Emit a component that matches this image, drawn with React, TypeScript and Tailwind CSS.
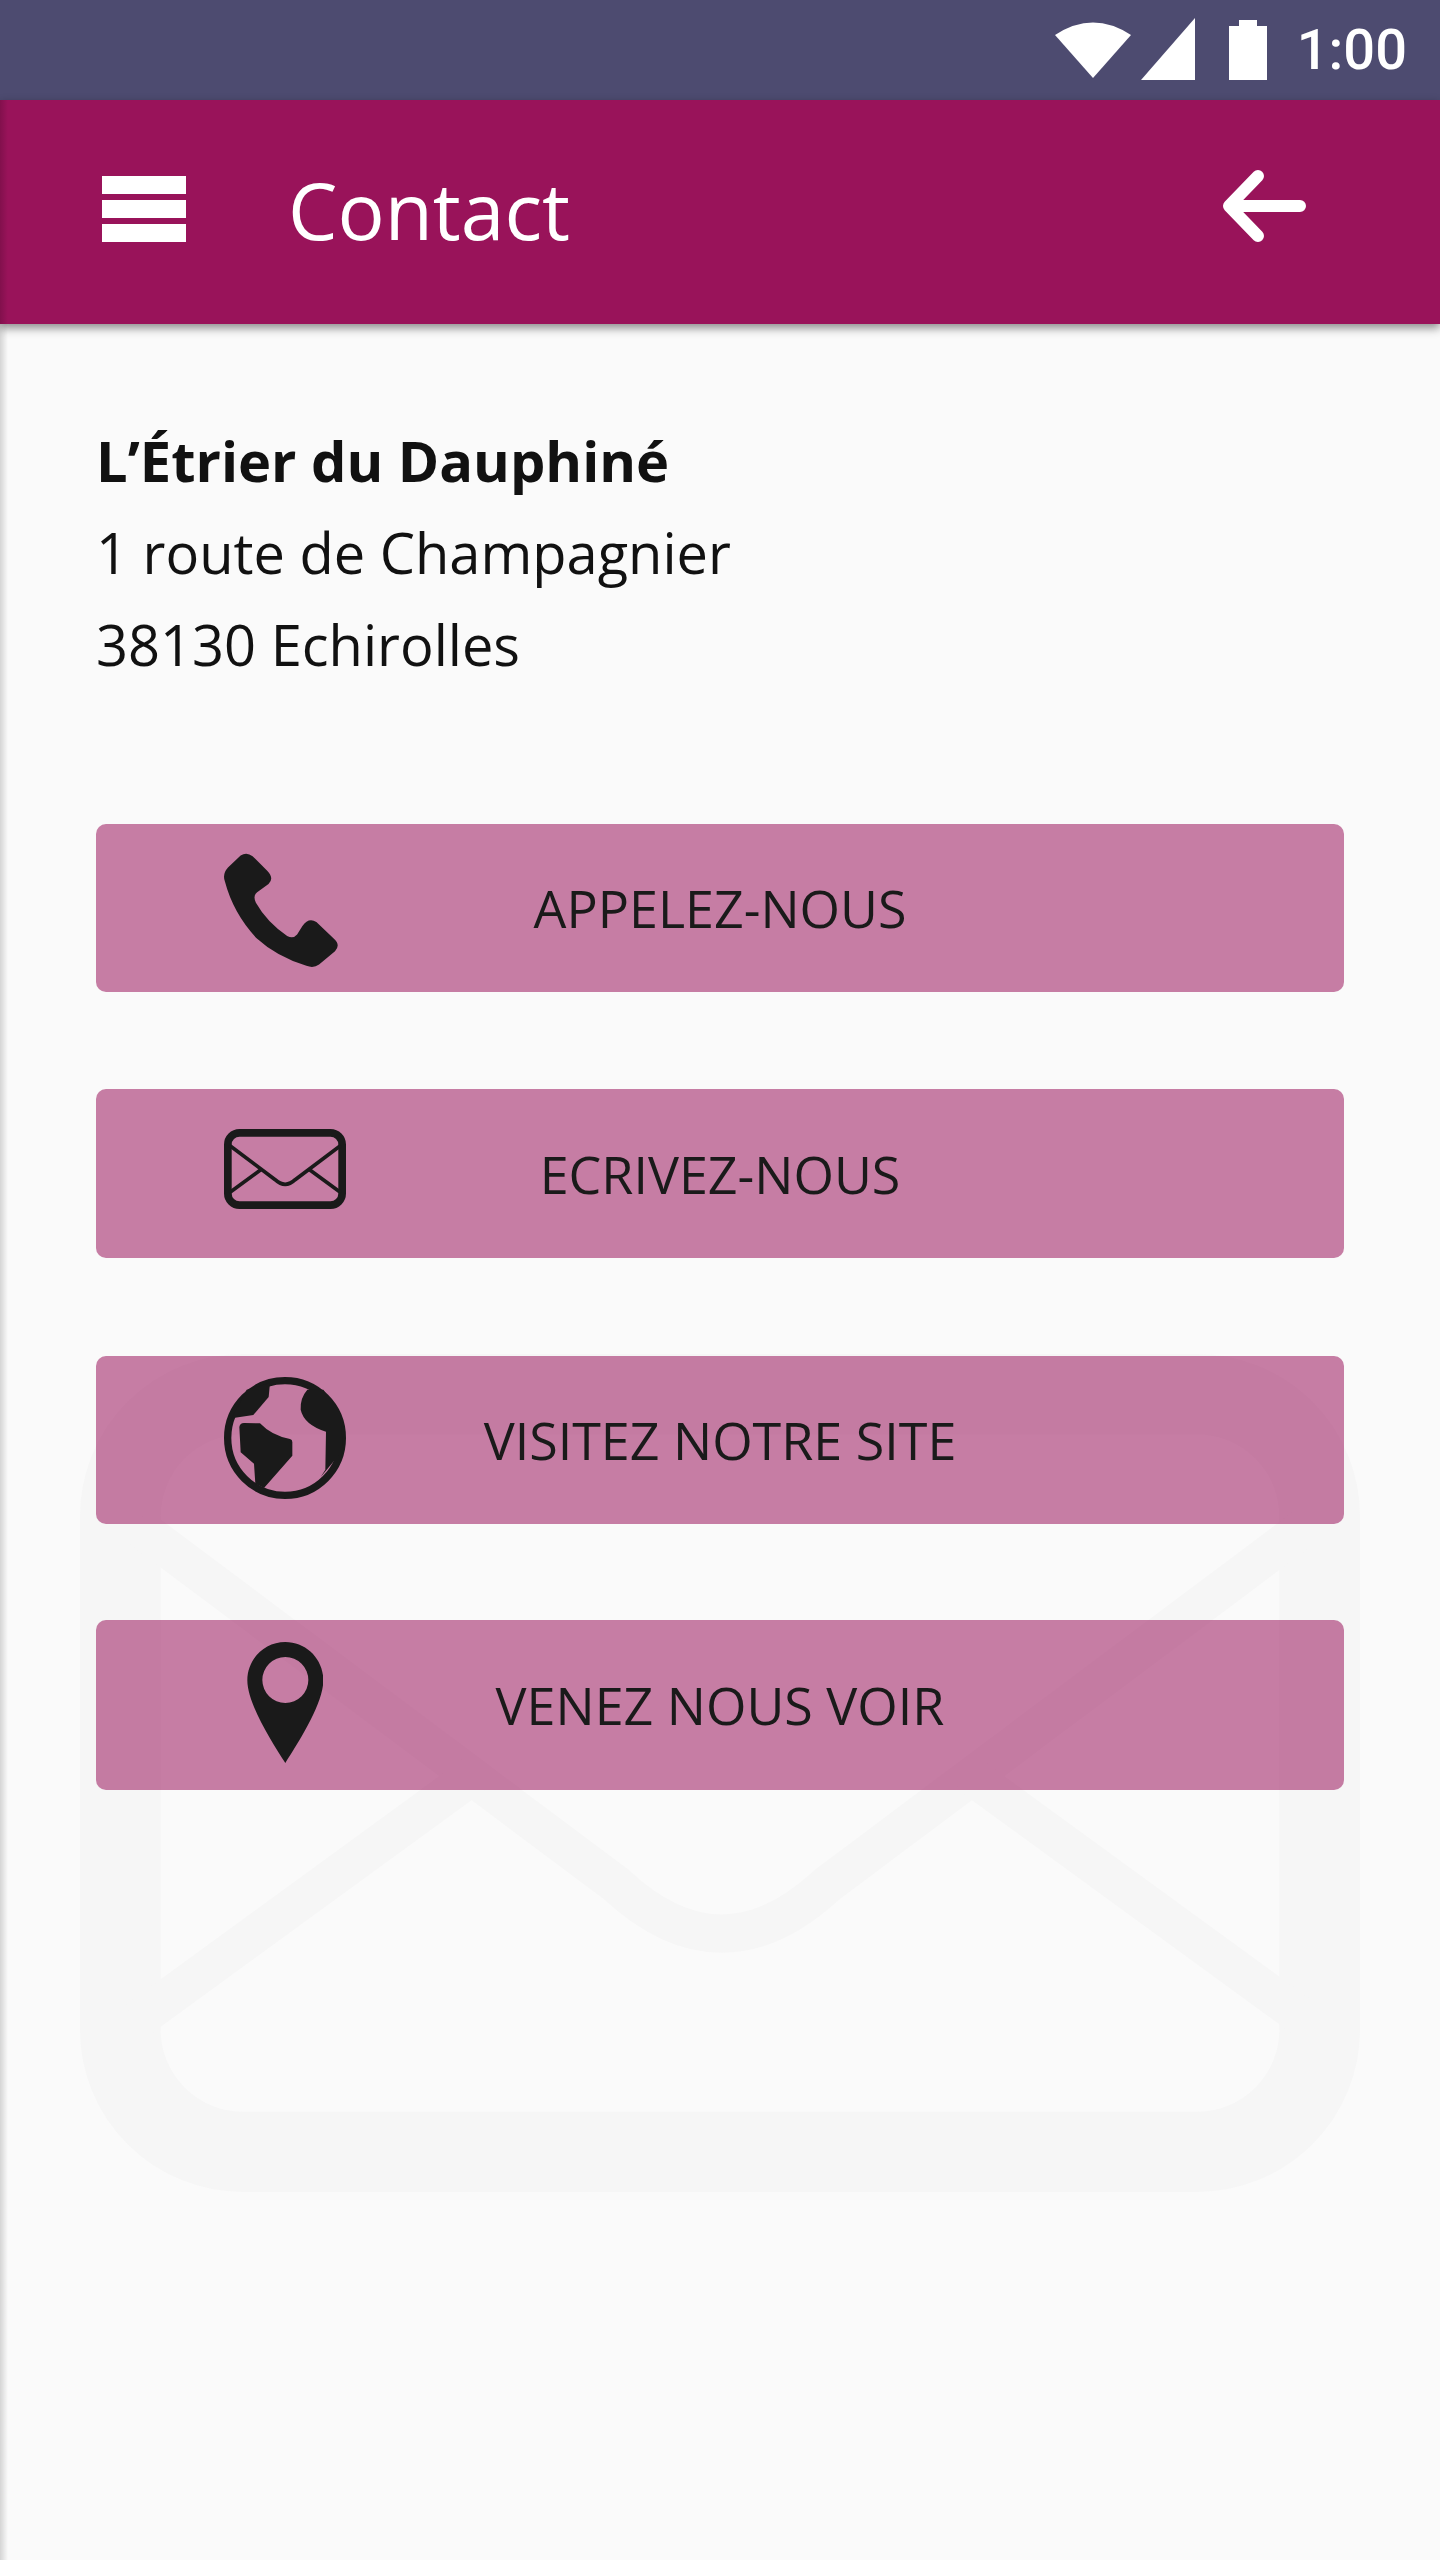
const ink = "#1a1a1a";

function Envelope({ className, color }: { className: string; color: string }) {
  return (
    <svg viewBox="432 955 365 240" preserveAspectRatio="none" className={className} fill="none" stroke={color}>
      <rect x="443.5" y="966.5" width="342" height="217" rx="35" strokeWidth="23" />
      <path d="M448 1004 L585 1107 Q615 1135 645 1107 L782 1004" strokeWidth="11" />
      <path d="M448 1146 L545 1075 M685 1075 L782 1146" strokeWidth="11" />
    </svg>
  );
}

function Phone() {
  return (
    <svg viewBox="432 130 343 340" className="w-[114px] h-[114px] mt-[4px]" fill={ink}>
      <path d="M482 136 Q500 124 518 138 L562 182 Q584 205 566 222 L538 242 Q516 254 528 278 Q560 335 622 378 Q640 388 652 374 L668 348 Q686 322 710 336 L762 386 Q784 405 766 424 L718 464 Q702 476 680 468 Q590 440 530 385 Q460 310 435 215 Q426 192 444 172 Z" />
    </svg>
  );
}

function Globe() {
  return (
    <svg viewBox="432 112 366 366" className="w-[122px] h-[122px] -mt-[4px]" fill={ink}>
      <circle cx="615" cy="295" r="172" fill="none" stroke={ink} strokeWidth="22" />
      <path d="M570 130 L566 172 L520 226 L455 236 L500 150 Z" />
      <path d="M682 150 Q660 175 662 210 Q672 255 738 276 L736 390 L722 412 L790 330 L780 220 L730 150 Z" />
      <path d="M478 262 Q480 250 492 250 L540 251 Q575 288 630 298 Q638 300 637 310 L637 348 L552 445 L526 432 L522 372 L482 338 Z" />
    </svg>
  );
}

function Pin() {
  return (
    <svg viewBox="500 905 228 363" className="w-[76px] h-[121px] mx-[23px] -mt-[5px]" fill={ink} fillRule="evenodd">
      <path d="M615 905 C678 905 729 956 729 1020 C729 1090 655 1205 615 1268 C575 1205 501 1090 501 1020 C501 956 552 905 615 905 Z M615 950 A68 68 0 1 0 615.01 1088 A68 68 0 1 0 615 950 Z" />
    </svg>
  );
}

const buttons = [
  { label: "APPELEZ-NOUS", icon: <div className="w-[122px]"><Phone /></div>, cls: "mt-[134px] h-[168px]" },
  { label: "ECRIVEZ-NOUS", icon: <div className="w-[122px]"><Envelope className="w-[122px] h-[80px] -mt-[10px] block" color={ink} /></div>, cls: "mt-[97px] h-[169px]" },
  { label: "VISITEZ NOTRE SITE", icon: <Globe />, cls: "mt-[98px] h-[168px]" },
  { label: "VENEZ NOUS VOIR", icon: <Pin />, cls: "mt-[96px] h-[170px]" },
];

export default function App() {
  return (
    <div className="relative w-[1440px] h-[2560px] overflow-hidden bg-[#fafafa] font-['Open_Sans',sans-serif]">
      <Envelope className="absolute left-[80px] top-[1354px] w-[1280px] h-[838px]" color="#f6f6f6" />

      <div className="relative h-[100px] bg-[#4d4b70] flex items-center justify-end pr-[33px] text-white">
        <svg viewBox="0 0 76 58" className="w-[76px] h-[58px] mt-[-2px]" fill="white">
          <path d="M0 15 Q38 -10 76 15 L38 58 Z" />
        </svg>
        <svg viewBox="0 0 54 62" className="w-[54px] h-[62px] ml-[10px] mt-[-2px]" fill="white">
          <path d="M54 0 V62 H0 Z" />
        </svg>
        <svg viewBox="0 0 38 60" className="w-[38px] h-[60px] ml-[34px] mt-[-1px]" fill="white">
          <path d="M10 0 H28 V6 H38 V60 H0 V6 H10 Z" />
        </svg>
        <span className="ml-[30px] font-['Roboto',sans-serif] font-medium text-[56px] leading-none">1:00</span>
      </div>

      <header className="relative h-[224px] bg-[#99135a] flex items-center text-white shadow-[0_4px_9px_rgba(0,0,0,0.45)]">
        <div className="ml-[102px] w-[84px] flex flex-col gap-[6px] mt-[-6px]">
          <div className="h-[18px] bg-white" />
          <div className="h-[18px] bg-white" />
          <div className="h-[18px] bg-white" />
        </div>
        <h1 className="ml-[102px] text-[78.5px] leading-none font-normal mt-[-4px]">Contact</h1>
        <svg viewBox="0 0 84 72" className="w-[84px] h-[72px] ml-auto mr-[134px] mt-[-12px]" fill="none" stroke="white" strokeWidth="12" strokeLinecap="round" strokeLinejoin="round">
          <path d="M78 36 H7 M36 6 L7 36 L36 66" />
        </svg>
      </header>

      <main className="relative px-[96px]">
        <div className="pt-[90px] text-[56px] leading-[92px] text-[#111111]">
          <p className="font-bold">L’Étrier du Dauphiné</p>
          <p>1 route de Champagnier</p>
          <p>38130 Echirolles</p>
        </div>
        <div className="flex flex-col">
          {buttons.map((b) => (
            <div key={b.label} className={`${b.cls} relative grid grid-cols-[1fr_auto_1fr] items-center rounded-[10px] bg-[#99135a]/[0.54]`}>
              <div className="pl-[128px] flex items-center">{b.icon}</div>
              <span className="text-[52px] leading-none text-[#1a1a1a]">{b.label}</span>
              <div />
            </div>
          ))}
        </div>
      </main>

      <div className="absolute left-0 top-[100px] bottom-0 w-[8px] bg-gradient-to-r from-black/15 to-transparent" />
    </div>
  );
}
